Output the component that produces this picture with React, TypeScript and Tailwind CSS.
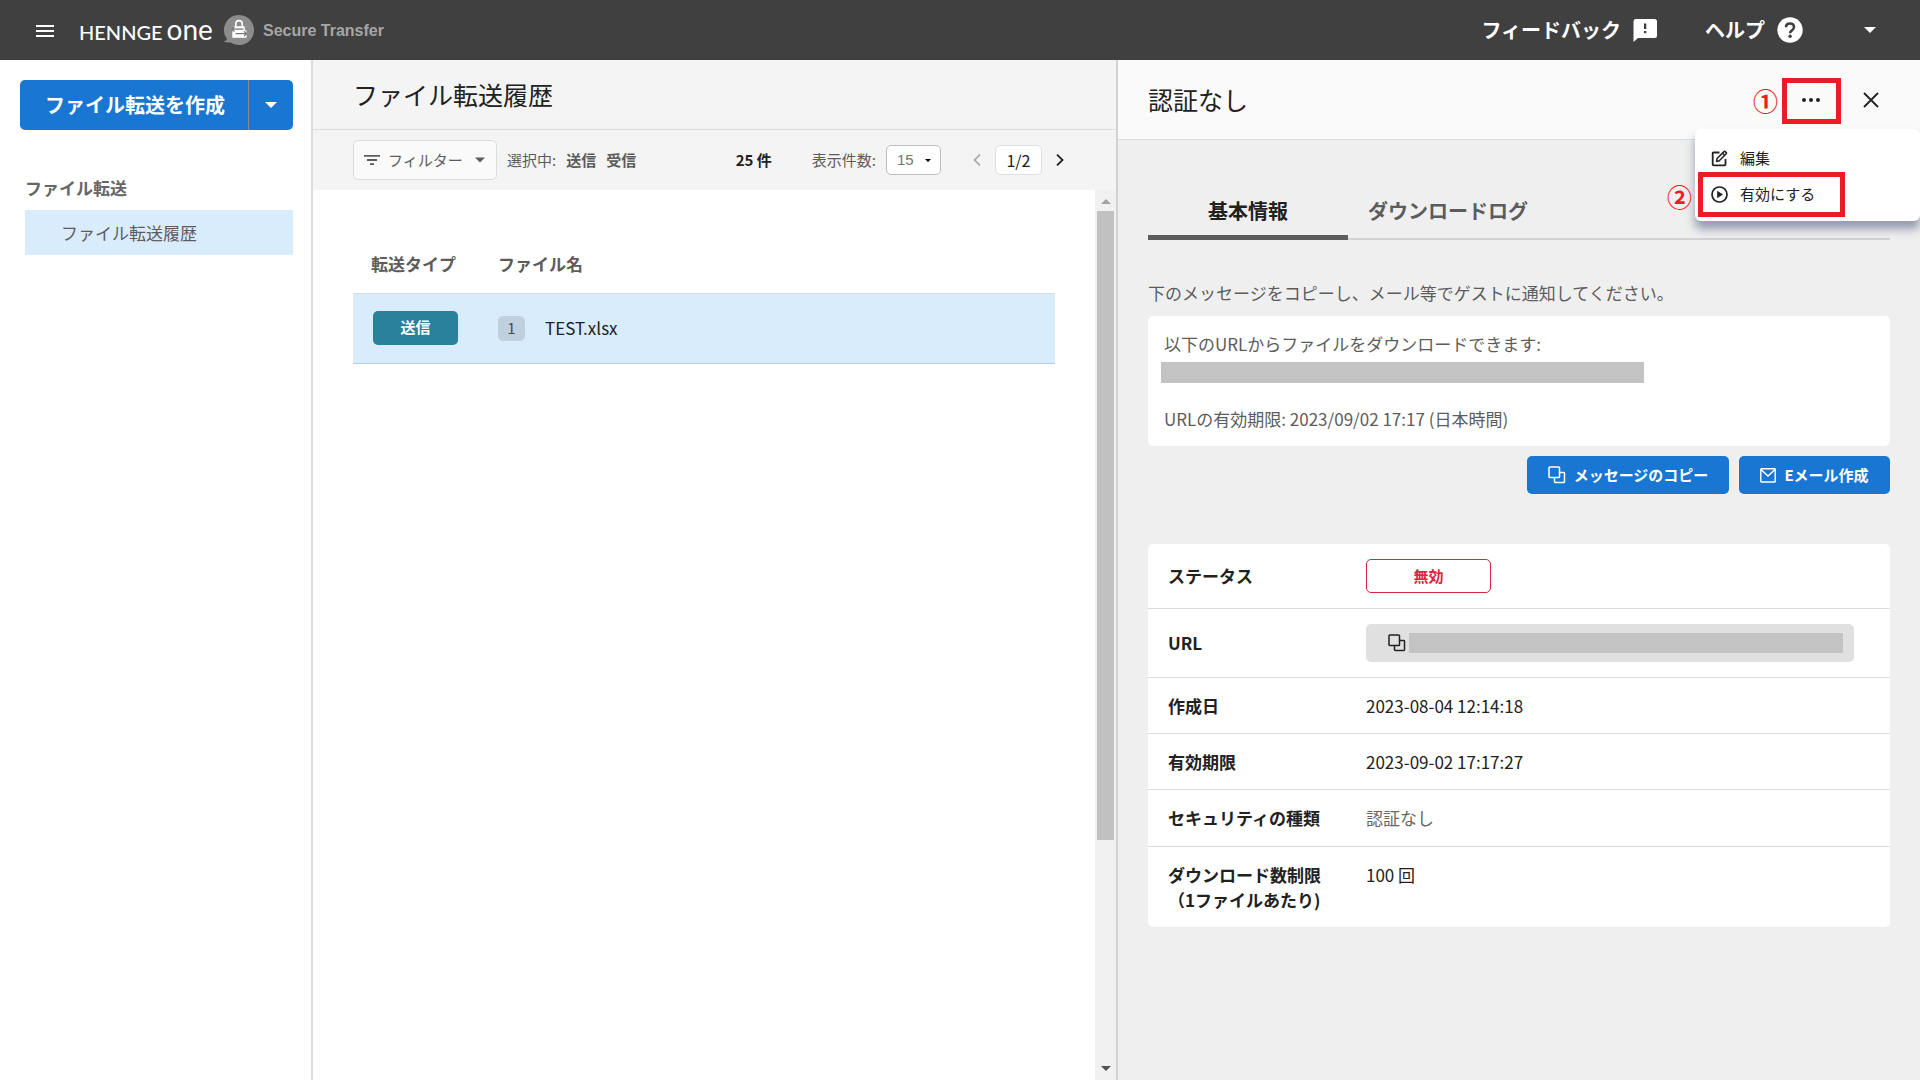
import React from "react";

const CopyIcon = ({ className = "" }: { className?: string }) => (
  <svg viewBox="0 0 18 18" className={className} fill="none" stroke="currentColor" strokeWidth="1.5" aria-hidden="true">
    <rect x="1" y="1" width="10.5" height="10.5" rx="0.8" />
    <path d="M11.5 6.5h4.3q.7 0 .7.7v8.6q0 .7-.7.7H7.2q-.7 0-.7-.7v-4.3" />
  </svg>
);

const MailIcon = () => (
  <svg viewBox="0 0 16 15" className="h-[15px] w-4" fill="none" stroke="currentColor" strokeWidth="1.4" aria-hidden="true">
    <rect x="0.8" y="0.8" width="14.4" height="13.2" rx="0.6" />
    <path d="M1 1.500l7 6.500 7-6.500" />
  </svg>
);

const Caret = ({ className = "" }: { className?: string }) => (
  <svg viewBox="0 0 12 6" className={className} fill="currentColor" aria-hidden="true">
    <path d="M0 0h12L6 6z" />
  </svg>
);

const EditIcon = () => (
  <svg viewBox="0 0 17 17" className="h-[17px] w-[17px]" fill="none" stroke="currentColor" aria-hidden="true">
    <path d="M8.5 2.5H2.6q-.9 0-.9.9v11q0 .9.9.9h11q.9 0 .9-.9V9" strokeWidth="1.8" />
    <path d="M5.6 11.4l.5-2.9L13 1.6q.6-.6 1.2 0l1 1q.6.6 0 1.2l-6.9 6.9z" strokeWidth="1.5" strokeLinejoin="round" />
    <path d="M11.6 3.2l2 2" strokeWidth="1.3" />
  </svg>
);

const PlayIcon = () => (
  <svg viewBox="0 0 17 17" className="h-[17px] w-[17px]" fill="none" aria-hidden="true">
    <circle cx="8.5" cy="8.5" r="7.5" stroke="currentColor" strokeWidth="1.7" />
    <path d="M6.2 4.8v7.4l5.8-3.7z" fill="currentColor" />
  </svg>
);

const ProductIcon = () => (
  <svg viewBox="0 0 32 32" className="h-8 w-8" aria-hidden="true">
    <path d="M16 1a15 15 0 1 1-8.400 27.400Q4 29 .5 27.500q3-1 3.500-2.500A15 15 0 0 1 16 1z" fill="#8c8c8c" />
    <path d="M12.800 13V9.800a3.200 3.200 0 0 1 6.400 0V13" fill="none" stroke="#fff" strokeWidth="1.600" />
    <path d="M10.500 12.200h11l.6 4.300h1.400v7.300H9.300v-5.300z" fill="#fff" />
    <path d="M20.500 15.200H9M11.500 12.800L9 15.200l2.500 2.400M12.500 19.700h11M21 17.300l2.500 2.400-2.500 2.400" fill="none" stroke="#777" strokeWidth="1.300" />
  </svg>
);

function Header() {
  return (
    <header className="flex h-[60px] items-center bg-[#404040] pl-9 pr-11 text-white">
      <button aria-label="メニュー" className="mt-0.5 flex w-[18px] flex-col gap-[3px]">
        <span className="h-0.5 bg-white" />
        <span className="h-0.5 bg-white" />
        <span className="h-0.5 bg-white" />
      </button>
      <a href="#" className="ml-[25px] flex items-center">
        <span className="flex w-[144px] items-baseline gap-1 font-['Lato'] leading-[30px]">
          <span className="text-xl font-medium">HENNGE</span>
          <span className="text-[28px]">one</span>
        </span>
        <ProductIcon />
        <span className="mt-0.5 ml-2 font-['Liberation_Sans'] text-base font-bold text-[#a6a6a6]">Secure Transfer</span>
      </a>
      <nav className="ml-auto flex items-center text-xl font-bold">
        <a href="#" className="flex items-center gap-3">
          フィードバック
          <svg viewBox="0 0 24 23" className="h-[23px] w-6" aria-hidden="true">
            <path d="M2.500 0h19Q24 0 24 2.500v14Q24 19 21.500 19H5l-4.500 4V2.500Q.5 0 2.500 0z" fill="#fff" />
            <path d="M11 4.500h2.300v5.500H11zM11 12h2.300v2.300H11z" fill="#404040" />
          </svg>
        </a>
        <a href="#" className="ml-12 flex items-center gap-3">
          ヘルプ
          <svg viewBox="0 0 26 26" className="h-[26px] w-[26px]" aria-hidden="true">
            <circle cx="13" cy="13" r="12.700" fill="#fff" />
            <path d="M9 10.300Q9 6.500 13 6.500t4 3.600q0 1.900-2 3.200-1.900 1.200-1.900 2.900" fill="none" stroke="#404040" strokeWidth="2.600" />
            <circle cx="13.100" cy="19.300" r="1.700" fill="#404040" />
          </svg>
        </a>
        <button aria-label="アカウント" className="ml-[61px]">
          <Caret className="h-1.5 w-3" />
        </button>
      </nav>
    </header>
  );
}

function Sidebar() {
  return (
    <aside className="border-r-2 border-[#dddddd] bg-white pr-[18px] pl-5 pt-5">
      <div className="flex h-[50px] rounded-[5px] bg-[#1976d2] text-white">
        <button className="flex-1 pl-0.5 text-xl font-bold">ファイル転送を作成</button>
        <button aria-label="その他の作成方法" className="flex w-[45px] items-center justify-center border-l border-[#8a8a8a]">
          <Caret className="h-1.5 w-3" />
        </button>
      </div>
      <h2 className="mt-[45px] pl-[5px] text-[17px] leading-[25px] font-bold text-[#666666]">ファイル転送</h2>
      <a href="#" className="mt-2.5 ml-[5px] flex h-[45px] items-center bg-[#d9ecfb] pl-9 text-[17px] text-[#5c5c5c]">
        ファイル転送履歴
      </a>
    </aside>
  );
}

function Toolbar() {
  return (
    <div className="flex h-[60px] items-center bg-[#f4f4f4] pr-[52px] pl-10 text-[15px] text-[#5c5c5c]">
      <button className="flex h-10 w-36 items-center rounded-[5px] border border-[#dcdcdc] bg-[#fafafa] pl-2.5">
        <svg viewBox="0 0 16 10" className="h-2.5 w-4" fill="currentColor" aria-hidden="true">
          <path d="M0 0h16v1.800H0zM3 4.100h10v1.800H3zM6 8.200h4V10H6z" />
        </svg>
        <span className="ml-2">フィルター</span>
        <Caret className="ml-3 h-1.5 w-2.5" />
      </button>
      <span className="ml-2.5">選択中:</span>
      <span className="ml-2.5 font-bold">送信</span>
      <span className="ml-2.5 font-bold">受信</span>
      <span className="ml-auto font-bold text-[#212121]">25 件</span>
      <label htmlFor="page-size" className="ml-10">表示件数:</label>
      <span className="relative ml-2.5 flex items-center">
        <select
          id="page-size"
          defaultValue="15"
          className="h-[30px] w-[55px] appearance-none rounded-[5px] border border-[#bdbdbd] bg-white pl-2.5 font-['Liberation_Sans'] text-[15px] text-[#757575]"
        >
          <option>15</option>
          <option>30</option>
          <option>50</option>
        </select>
        <Caret className="pointer-events-none absolute right-2.5 h-[3px] w-1.5 text-black" />
      </span>
      <button aria-label="前のページ" disabled className="ml-8 text-[#a6a6a6]">
        <svg viewBox="0 0 8 12" className="h-3 w-2" fill="none" stroke="currentColor" strokeWidth="1.600" aria-hidden="true">
          <path d="M7 .6L1.500 6 7 11.400" />
        </svg>
      </button>
      <span className="ml-3.5 flex h-[30px] w-[47px] items-center justify-center rounded-[5px] border border-[#e0e0e0] bg-white text-base text-[#212121]">
        1/2
      </span>
      <button aria-label="次のページ" className="ml-3.5 text-[#212121]">
        <svg viewBox="0 0 8 12" className="h-3 w-2" fill="none" stroke="currentColor" strokeWidth="1.800" aria-hidden="true">
          <path d="M1 .6L6.500 6 1 11.400" />
        </svg>
      </button>
    </div>
  );
}

function HistoryPane() {
  return (
    <main className="flex flex-col bg-white">
      <h1 className="flex h-[70px] items-center border-b border-[#dcdcdc] bg-[#f4f4f4] pl-10 text-[25px] text-[#212121]">
        ファイル転送履歴
      </h1>
      <Toolbar />
      <div className="flex flex-1">
        <div className="flex-1 pt-[55px] pr-10 pl-10">
          <table className="w-full text-left text-[17px]">
            <thead>
              <tr className="h-12 text-[#5c5c5c]">
                <th className="w-[145px] pb-2.5 pl-[18px] font-bold">転送タイプ</th>
                <th className="pb-2.5 font-bold">ファイル名</th>
              </tr>
            </thead>
            <tbody>
              <tr className="h-[70px] border-t border-b border-t-[#d9dde0] border-b-[#b5cde0] bg-[#d9ecfb]">
                <td className="pl-5">
                  <span className="flex h-[34px] w-[85px] items-center justify-center rounded-[5px] bg-[#28809b] pb-px text-[15px] font-bold text-white">
                    送信
                  </span>
                </td>
                <td>
                  <span className="flex items-center gap-5 text-[#212121]">
                    <span className="flex h-[25px] w-[27px] items-center justify-center rounded-[5px] bg-[#bfd0de] text-[15px] text-[#4c4c4c]">
                      1
                    </span>
                    TEST.xlsx
                  </span>
                </td>
              </tr>
            </tbody>
          </table>
        </div>
        <div className="flex w-[21px] flex-col items-center bg-[#f1f1f1] pt-[9px] pb-[9px]" aria-hidden="true">
          <Caret className="h-[5px] w-2.5 rotate-180 text-[#a3a3a3]" />
          <div className="mt-[7px] h-[629px] w-[17px] bg-[#c1c1c1]" />
          <Caret className="mt-auto h-[5px] w-2.5 text-[#505050]" />
        </div>
      </div>
    </main>
  );
}

function ActionMenu() {
  return (
    <div className="absolute top-[69px] right-0 z-10 w-[225px] rounded-md bg-white pt-[11px] text-[15px] text-[#212121] shadow-[0_8px_10px_rgba(60,70,110,0.5)]">
      <button className="flex h-9 w-full items-center gap-3 pl-4">
        <EditIcon />
        編集
      </button>
      <button className="mb-[9px] flex h-9 w-full items-center gap-3 pl-4">
        <PlayIcon />
        有効にする
      </button>
      <div className="pointer-events-none absolute top-[43px] left-[3px] h-[45px] w-[147px] border-[5px] border-[#ed1c24]" />
      <span className="absolute top-[49px] -left-7 text-[25px] leading-[36px] font-bold text-[#ed1c24]">②</span>
    </div>
  );
}

const labelClass = "w-[218px] pl-5 text-left align-middle font-bold";

function DetailTable() {
  return (
    <div className="mt-[50px] overflow-hidden rounded-[5px] bg-white">
      <table className="w-full text-[17px] leading-[25px] text-[#212121]">
        <tbody className="divide-y divide-[#dcdcdc]">
          <tr className="h-16">
            <th scope="row" className={labelClass}>ステータス</th>
            <td>
              <span className="flex h-[34px] w-[125px] items-center justify-center rounded-[5px] border border-[#dc2342] pb-px text-[15px] font-bold text-[#dc2342]">
                無効
              </span>
            </td>
          </tr>
          <tr className="h-[69px]">
            <th scope="row" className={labelClass}>URL</th>
            <td className="pr-9">
              <div className="flex h-[38px] items-center gap-[3px] rounded-[5px] bg-[#e0e0e0] pr-[11px] pl-[22px]">
                <button aria-label="URLをコピー">
                  <CopyIcon className="h-[18px] w-[18px]" />
                </button>
                <div className="h-5 flex-1 bg-[#c3c3c3]" />
              </div>
            </td>
          </tr>
          <tr className="h-14">
            <th scope="row" className={labelClass}>作成日</th>
            <td>2023-08-04 12:14:18</td>
          </tr>
          <tr className="h-14">
            <th scope="row" className={labelClass}>有効期限</th>
            <td>2023-09-02 17:17:27</td>
          </tr>
          <tr className="h-[57px]">
            <th scope="row" className={labelClass}>セキュリティの種類</th>
            <td className="text-[#666666]">認証なし</td>
          </tr>
          <tr className="h-[81px]">
            <th scope="row" className={labelClass}>
              ダウンロード数制限
              <br />
              （1ファイルあたり)
            </th>
            <td className="pt-[15px] align-top">100 回</td>
          </tr>
        </tbody>
      </table>
    </div>
  );
}

function DetailPane() {
  return (
    <section className="relative border-l-2 border-[#d2d2d2] bg-[#efefef]">
      <div className="flex h-20 items-center border-b border-[#dcdcdc] bg-[#fafafa] pr-[41px] pl-[30px] text-[#212121]">
        <h2 className="text-[25px]">認証なし</h2>
        <span className="ml-auto text-[25px] leading-[34px] font-bold text-[#ed1c24]">①</span>
        <button aria-label="操作" className="mt-0.5 ml-1 flex h-[46px] w-[59px] items-center justify-center gap-[3px] border-[5px] border-[#ed1c24] pr-0.5 pb-0.5">
          <span className="h-1 w-1 rounded-full bg-[#212121]" />
          <span className="h-1 w-1 rounded-full bg-[#212121]" />
          <span className="h-1 w-1 rounded-full bg-[#212121]" />
        </button>
        <button aria-label="閉じる" className="ml-[22px]">
          <svg viewBox="0 0 16 16" className="h-4 w-4" stroke="currentColor" strokeWidth="1.800" aria-hidden="true">
            <path d="M1 1l14 14M15 1L1 15" />
          </svg>
        </button>
      </div>
      <ActionMenu />
      <div className="px-[30px] pt-[45px]">
        <div role="tablist" className="flex h-[55px] text-xl font-bold text-[#5c5c5c] shadow-[inset_0_-2px_0_#d2d2d2]">
          <button role="tab" aria-selected="true" className="w-[200px] border-b-[5px] border-[#5c5c5c] pt-0.5 text-[#212121]">
            基本情報
          </button>
          <button role="tab" aria-selected="false" className="border-b-[5px] border-transparent px-5 pt-0.5">
            ダウンロードログ
          </button>
        </div>
        <p className="mt-10 text-[17px] leading-[25px] text-[#5c5c5c]">
          下のメッセージをコピーし、メール等でゲストに通知してください。
        </p>
        <div className="mt-[11px] rounded-[5px] bg-white px-4 py-[15px] text-[17px] leading-[25px] text-[#5c5c5c]">
          <p>以下のURLからファイルをダウンロードできます:</p>
          <div className="mt-1.5 mb-[23px] -ml-[3px] h-[21px] w-[483px] max-w-full bg-[#c3c3c3]" />
          <p>URLの有効期限: 2023/09/02 17:17 (日本時間)</p>
        </div>
        <div className="mt-2.5 flex justify-end gap-2.5 text-[15px] font-bold text-white">
          <button className="flex h-[38px] w-[202px] items-center justify-center gap-2 rounded-[5px] bg-[#1976d2]">
            <CopyIcon className="h-[18px] w-[18px]" />
            メッセージのコピー
          </button>
          <button className="flex h-[38px] w-[151px] items-center justify-center gap-2 rounded-[5px] bg-[#1976d2]">
            <MailIcon />
            Eメール作成
          </button>
        </div>
        <DetailTable />
      </div>
    </section>
  );
}

export default function App() {
  return (
    <div lang="ja" className="flex min-h-screen flex-col font-['Noto_Sans_CJK_JP',sans-serif]">
      <Header />
      <div className="grid flex-1 grid-cols-[313px_minmax(0,1fr)_804px]">
        <Sidebar />
        <HistoryPane />
        <DetailPane />
      </div>
    </div>
  );
}
